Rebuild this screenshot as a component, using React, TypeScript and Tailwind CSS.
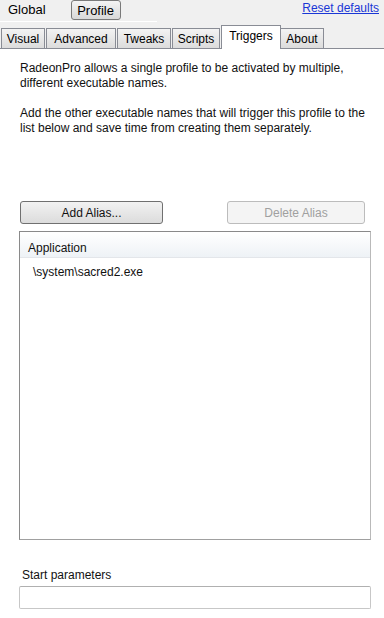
import React from "react";

const tabs = [
  { label: "Visual", w: 44 },
  { label: "Advanced", w: 70 },
  { label: "Tweaks", w: 54 },
  { label: "Scripts", w: 48 },
];

export default function App() {
  return (
    <div className="w-[384px] h-[618px] bg-white font-['Liberation_Sans',Arial,sans-serif] text-[12px] text-black overflow-hidden flex flex-col">
      <div className="bg-[#f0f0f0] flex flex-col">
        <div className="h-[22px] flex items-start relative">
          <span className="text-[13px] mt-[2px] ml-[8px] leading-[16px]">Global</span>
          <div className="ml-[25px] w-[50px] h-[20px] rounded-[3px] border border-[#7a7a7a] bg-linear-to-b from-[#f4f4f4] to-[#d9d9d9] text-[13px] leading-[17px] flex items-center justify-center">
            Profile
          </div>
          <a className="ml-auto mr-[5px] mt-[1px] text-[12px] leading-[14px] text-[#1a37d6] underline">Reset defaults</a>
          <div className="absolute left-0 top-[21px] w-[157px] h-[1px] bg-white" />
        </div>
        <div className="h-[27px] flex items-end pl-[1px] gap-[1px] border-b border-[#898c95]">
          {tabs.map((t) => (
            <div
              key={t.label}
              style={{ width: t.w }}
              className="h-[20px] border border-b-0 border-[#898c95] bg-linear-to-b from-[#f3f3f3] to-[#dcdcdc] flex items-center justify-center leading-[14px]"
            >
              {t.label}
            </div>
          ))}
          <div className="w-[60px] h-[24px] -mb-px border border-b-0 border-[#898c95] bg-white flex items-start justify-center pt-[3px] leading-[14px]">
            Triggers
          </div>
          <div className="w-[43px] h-[20px] -ml-[1px] border border-b-0 border-l-0 border-[#898c95] bg-linear-to-b from-[#f3f3f3] to-[#dcdcdc] flex items-center justify-center leading-[14px]">
            About
          </div>
        </div>
      </div>

      <div className="flex flex-col pt-[12px] px-[19px] text-[#111]">
        <p className="pl-[1px] leading-[15px]">
          RadeonPro allows a single profile to be activated by multiple,
          <br />
          different executable names.
        </p>
        <p className="pl-[1px] leading-[15px] mt-[15px]">
          Add the other executable names that will trigger this profile to the
          <br />
          list below and save time from creating them separately.
        </p>

        <div className="flex mt-[65px] pl-[1px]">
          <div className="w-[145px] h-[23px] rounded-[3px] border border-[#707070] bg-linear-to-b from-[#f2f2f2] to-[#dcdcdc] flex items-center justify-center leading-[14px]">
            Add Alias...
          </div>
          <div className="ml-[64px] w-[140px] h-[23px] rounded-[3px] border border-[#bcbcbc] bg-[#f4f4f4] text-[#a0a0a0] flex items-center justify-center leading-[14px]">
            Delete Alias
          </div>
        </div>

        <div className="mt-[7px] w-[352px] h-[309px] border border-[#8a8a8a] border-r-[#b9b9b9] border-b-[#a0a0a0] bg-white flex flex-col">
          <div className="h-[25px] mt-[1px] bg-linear-to-b from-white to-[#eef2f6] border-b border-[#e3e6ea] flex items-start pt-[8px] pl-[8px] leading-[14px]">
            Application
          </div>
          <div className="pl-[13px] mt-[7px] leading-[14px]">\system\sacred2.exe</div>
        </div>

        <div className="mt-[28px] pl-[3px] leading-[15px]">Start parameters</div>
        <div className="mt-[3px] w-[352px] h-[23px] rounded-[2px] border border-[#c7c7c7] border-t-[#b0b0b0] bg-white" />
      </div>
    </div>
  );
}
